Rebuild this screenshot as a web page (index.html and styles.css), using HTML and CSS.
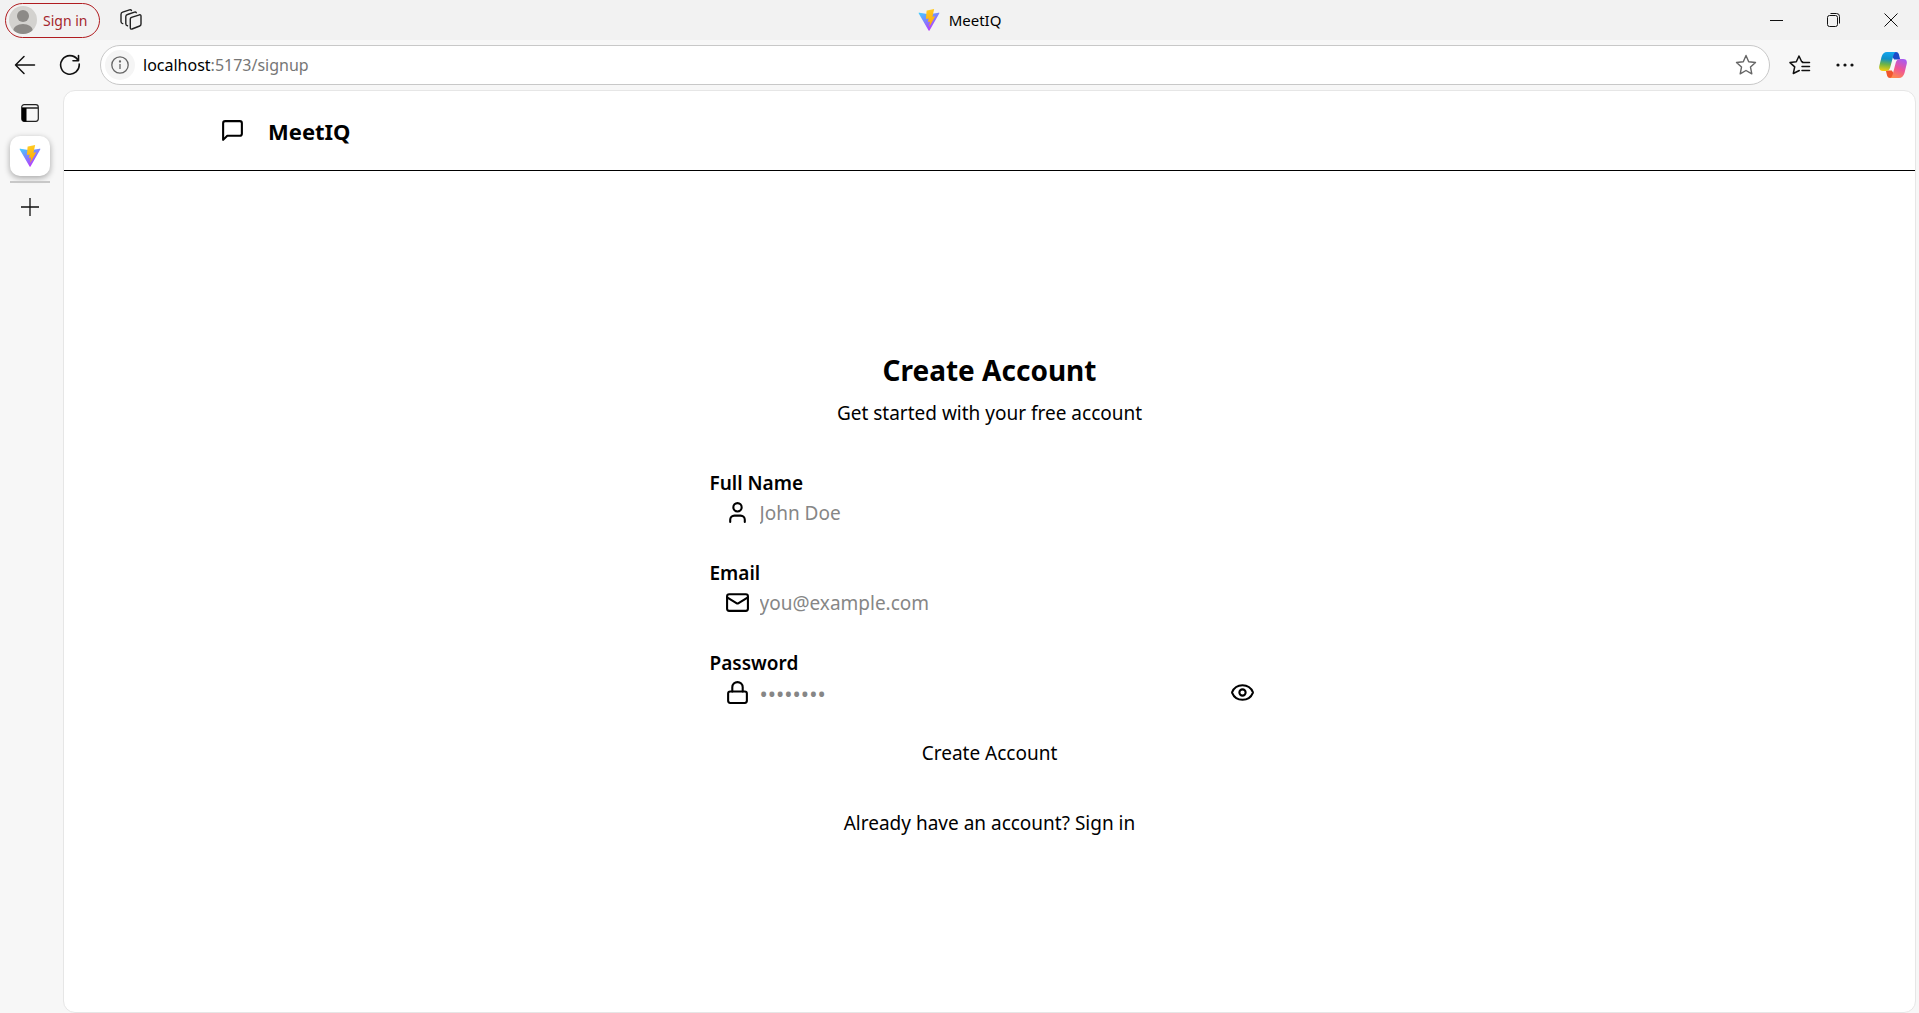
FILE: index.html
```html
<!DOCTYPE html>
<html lang="en">
<head>
<meta charset="utf-8">
<title>MeetIQ</title>
<link rel="stylesheet" href="styles.css">
</head>
<body>
<svg class="defs" aria-hidden="true">
  <defs>
    <linearGradient id="vite-a" x1="0" y1="0" x2="0.6" y2="1"><stop offset="0" stop-color="#41d1ff"/><stop offset="1" stop-color="#bd34fe"/></linearGradient>
    <linearGradient id="vite-b" x1="0.4" y1="0" x2="0.6" y2="1"><stop offset="0" stop-color="#ffd84a"/><stop offset="0.1" stop-color="#ffc820"/><stop offset="1" stop-color="#ffa800"/></linearGradient>
    <linearGradient id="cp-a" x1="0.4" y1="0" x2="0.3" y2="1"><stop offset="0" stop-color="#12a5ee"/><stop offset="0.35" stop-color="#1090c8"/><stop offset="0.65" stop-color="#6fb446"/><stop offset="1" stop-color="#f7cf10"/></linearGradient>
    <linearGradient id="cp-b" x1="0.7" y1="0" x2="0.3" y2="1"><stop offset="0" stop-color="#a95cf0"/><stop offset="0.5" stop-color="#ee5598"/><stop offset="1" stop-color="#ff8a4c"/></linearGradient>
    <symbol id="vite" viewBox="0 0 32 32">
      <path fill="url(#vite-a)" d="M30.900 6.500 16.800 31.200a.8.8 0 0 1-1.400 0L1.100 6.500a.8.8 0 0 1 .9-1.200l14 2.500 14-2.500a.8.8 0 0 1 .9 1.200z"/>
      <path fill="url(#vite-b)" d="m23.500 0-11 2.200-1 12.300 4-.8-1 5.300 3-.8-1.200 8 8.700-15.700-4 .8z"/>
    </symbol>
  </defs>
</svg>
<div class="window">
  <header class="titlebar">
    <div class="titlebar-left">
      <button class="profile" type="button">
        <svg width="28" height="28" viewBox="0 0 28 28" aria-hidden="true"><clipPath id="av"><circle cx="14" cy="14" r="14"/></clipPath><g clip-path="url(#av)"><path fill="#d3d2cf" d="M0 0h28v28H0z"/><circle cx="14" cy="10" r="6" fill="#8c8a87"/><ellipse cx="14" cy="25" rx="10" ry="7" fill="#8c8a87"/></g></svg>
        <span>Sign in</span>
      </button>
      <button class="icon-button" type="button" aria-label="Workspaces">
        <svg width="22" height="22" viewBox="0 0 22 22" fill="none" stroke="#222" stroke-width="1.400" stroke-linecap="round" stroke-linejoin="round"><path d="m11.500 8.300 8-2.500q1.500-.3 1.500 1.200v8q0 1.500-1.300 2l-7.700 3q-1.700.4-1.700-1.200V10q0-1.300 1.200-1.700z"/><path d="M16.300 3.700q-.5-1-1.800-.6l-7 2.400Q5.800 6 5.800 7.600v7.200q0 1.700 1.700 2"/><path d="M11.500 1.500q-.5-1-2-.6L2.700 3.200Q1 3.800 1 5.400v7.200q0 1.700 1.700 2"/></svg>
      </button>
    </div>
    <div class="window-title"><svg width="22" height="22" aria-hidden="true"><use href="#vite"/></svg><span>MeetIQ</span></div>
    <div class="window-controls">
      <button type="button" aria-label="Minimize"><svg width="14" height="14" stroke="#111"><path d="M0 7.500h13"/></svg></button>
      <button type="button" aria-label="Restore"><svg width="14" height="14" fill="none" stroke="#111"><rect x=".5" y="2.500" width="10" height="11" rx="2"/><path d="M3.500.5h6q3 0 3 3v7"/></svg></button>
      <button type="button" aria-label="Close"><svg width="14" height="14" stroke="#111"><path d="m.5.500 13 13m0-13-13 13"/></svg></button>
    </div>
  </header>

  <div class="toolbar">
    <button class="icon-button" type="button" aria-label="Back"><svg width="22" height="20" viewBox="0 0 22 20" fill="none" stroke="#111" stroke-width="1.500" stroke-linecap="round" stroke-linejoin="round"><path d="M20.500 10h-19M10 1.500 1.500 10l8.500 8.500"/></svg></button>
    <button class="icon-button reload" type="button" aria-label="Refresh"><svg width="22" height="22" viewBox="0 0 22 22" fill="none" stroke="#111" stroke-width="1.600" stroke-linecap="round" stroke-linejoin="round"><path d="M20.200 10A9.300 9.300 0 1 1 18.500 5.500M19.500 1.500v5.300H14"/></svg></button>
    <div class="address">
      <button class="site-info" type="button" aria-label="Site information"><svg width="18" height="18" viewBox="0 0 18 18" fill="none" stroke="#666" stroke-width="1.300"><circle cx="9" cy="9" r="8.200"/><path d="M9 8v5"/><circle cx="9" cy="5.500" r=".5" fill="#666"/></svg></button>
      <span class="url"><b>localhost</b>:5173/signup</span>
      <button class="icon-button" type="button" aria-label="Add to favorites"><svg width="22" height="22" viewBox="0 0 22 22" fill="none" stroke="#666" stroke-width="1.400" stroke-linejoin="round"><path d="m11 1.500 2.700 6.200 6.800.8-5 4.600 1.300 6.700-5.800-3.300-5.800 3.300 1.300-6.700-5-4.600 6.800-.8z"/></svg></button>
    </div>
    <div class="toolbar-actions">
      <button class="icon-button" type="button" aria-label="Favorites"><svg width="22" height="22" viewBox="0 0 22 22" fill="none" stroke="#111" stroke-width="1.500" stroke-linejoin="round" stroke-linecap="round"><path d="M13.500 7.700h-.8L10 2 7.300 7.700l-6.300.9 4.700 4.300-1.400 6.600 6-3M13.500 8.500h7M13 12.500h7.500M13 16.500h7.500"/></svg></button>
      <button class="icon-button" type="button" aria-label="Settings and more"><svg width="18" height="4" fill="#111"><circle cx="2" cy="2" r="1.600"/><circle cx="9" cy="2" r="1.600"/><circle cx="16" cy="2" r="1.600"/></svg></button>
      <button class="icon-button" type="button" aria-label="Copilot"><svg width="28" height="26" viewBox="0 0 28 26"><path fill="#1b49c8" d="M10 0h7q2.200 0 2.800 2l1.400 5.500h-6z"/><path fill="#f0562c" d="M18 26h-7q-2.200 0-2.800-2l-1.400-5.500h6z"/><path fill="url(#cp-a)" d="M8 0h9q-1.800.5-2.500 3l-3.300 12.500Q10.200 19 7 19H4q-4.700 0-3.700-5L2.500 5Q4 0 8 0z"/><path fill="url(#cp-b)" d="M20 26h-9q1.800-.5 2.500-3l3.300-12.500Q17.800 7 21 7h3q4.700 0 3.700 5l-2.200 9Q24 26 20 26z"/></svg></button>
    </div>
  </div>

  <div class="workspace">
    <nav class="tabs" aria-label="Vertical tabs">
      <button class="icon-button" type="button" aria-label="Tab actions"><svg width="18" height="18" fill="none" stroke="#222" stroke-width="1.200"><rect x=".7" y=".7" width="16.600" height="16.600" rx="2.500"/><path d="M1 4h16" stroke-width="1.500"/><path fill="#000" stroke="none" d="M1 4h4.500v13.500H3q-2 0-2-2z"/></svg></button>
      <button class="active-tab" type="button" aria-label="MeetIQ"><svg width="22" height="22"><use href="#vite"/></svg></button>
      <button class="icon-button new-tab" type="button" aria-label="New tab"><svg width="18" height="18" stroke="#111" stroke-width="1.300"><path d="M9 0v18M0 9h18"/></svg></button>
    </nav>

    <div class="page">
      <header class="site-header">
        <a class="brand" href="#">
          <svg class="icon" viewBox="0 0 24 24"><path d="M21 15a2 2 0 0 1-2 2H7l-4 4V5a2 2 0 0 1 2-2h14a2 2 0 0 1 2 2z"/></svg>
          <span>MeetIQ</span>
        </a>
      </header>
      <main class="signup">
        <div class="card">
          <h1>Create Account</h1>
          <p>Get started with your free account</p>
          <form>
            <div class="field">
              <label for="name">Full Name</label>
              <div class="control">
                <svg class="icon" viewBox="0 0 24 24"><path d="M19 21v-2a4 4 0 0 0-4-4H9a4 4 0 0 0-4 4v2"/><circle cx="12" cy="7" r="4"/></svg>
                <input id="name" type="text" placeholder="John Doe">
              </div>
            </div>
            <div class="field">
              <label for="email">Email</label>
              <div class="control">
                <svg class="icon" viewBox="0 0 24 24"><rect width="20" height="16" x="2" y="4" rx="2"/><path d="m22 7-8.970 5.700a1.940 1.940 0 0 1-2.060 0L2 7"/></svg>
                <input id="email" type="email" placeholder="you@example.com">
              </div>
            </div>
            <div class="field">
              <label for="password">Password</label>
              <div class="control">
                <svg class="icon" viewBox="0 0 24 24"><rect width="18" height="11" x="3" y="11" rx="2"/><path d="M7 11V7a5 5 0 0 1 10 0v4"/></svg>
                <input id="password" type="password" placeholder="••••••••">
                <button type="button" aria-label="Show password"><svg class="icon" viewBox="0 0 24 24"><path d="M2.060 12.350a1 1 0 0 1 0-.7 10.750 10.750 0 0 1 19.880 0 1 1 0 0 1 0 .7 10.750 10.750 0 0 1-19.880 0"/><circle cx="12" cy="12" r="3"/></svg></button>
              </div>
            </div>
            <button type="submit">Create Account</button>
          </form>
          <p>Already have an account? <a href="#">Sign in</a></p>
        </div>
      </main>
    </div>
  </div>
</div>
</body>
</html>
```
FILE: styles.css
```css
* { box-sizing: border-box; }
body {
  margin: 0;
  background: #f7f7f7;
  color: #000;
  font-family: "Segoe UI", "Noto Sans", sans-serif;
}
button {
  padding: 0;
  border: 0;
  background: none;
  color: inherit;
  font: inherit;
}
a { color: inherit; text-decoration: none; }
svg { display: block; flex: none; }
.defs { position: absolute; width: 0; height: 0; }

.window { display: flex; flex-direction: column; min-height: 100vh; }

/* Title bar */
.titlebar {
  display: grid;
  grid-template-columns: 1fr auto 1fr;
  height: 40px;
  background: #f2f2f2;
  font-size: 14px;
}
.titlebar-left { display: flex; align-items: center; gap: 20px; padding: 0 5px; }
.profile {
  display: flex;
  align-items: center;
  gap: 6px;
  height: 35px;
  padding: 0 12px 0 3px;
  border: 1px solid #b01c20;
  border-radius: 18px;
  color: #a4262c;
}
.icon-button { display: grid; place-items: center; }
.window-title { display: flex; align-items: center; gap: 9px; font-size: 15px; }
.window-controls { display: flex; justify-content: flex-end; }
.window-controls button { display: grid; place-items: center; width: 57px; }

/* Toolbar */
.toolbar {
  display: flex;
  align-items: center;
  height: 50px;
  padding: 0 12px 0 14px;
}
.reload { margin: 0 19px 0 23px; }
.address {
  display: flex;
  flex: 1;
  align-items: center;
  height: 40px;
  padding: 0 12px 0 4px;
  border: 1px solid #c8c8c8;
  border-radius: 20px;
  background: #fff;
}
.site-info {
  display: grid;
  place-items: center;
  width: 30px;
  height: 30px;
  border-radius: 50%;
  background: #f5f5f5;
}
.url { flex: 1; padding-left: 8px; color: #767676; font-size: 16px; }
.url b { color: #000; font-weight: 400; }
.toolbar-actions { display: flex; align-items: center; gap: 25px; padding-left: 19px; }

/* Vertical tabs */
.workspace { display: flex; flex: 1; }
.tabs {
  display: flex;
  flex-direction: column;
  align-items: center;
  width: 63px;
  padding: 14px 3px 0 0;
}
.active-tab {
  display: grid;
  place-items: center;
  width: 40px;
  height: 40px;
  margin: 14px 0 5px;
  border-radius: 10px;
  background: #fff;
  box-shadow: 0 2px 6px #0005;
}
.new-tab { width: 40px; padding-top: 15px; border-top: 2px solid #c8c8c8; }

/* Web page */
.page {
  display: flex;
  flex: 1;
  flex-direction: column;
  margin-right: 3px;
  border: 1px solid #e6e6e6;
  border-radius: 12px;
  background: #fff;
  font-size: 19px;
  line-height: 30px;
}
.icon {
  width: 25px;
  height: 25px;
  fill: none;
  stroke: currentColor;
  stroke-width: 2;
  stroke-linecap: round;
  stroke-linejoin: round;
}
.site-header {
  padding: 0 156px;
  border-bottom: 1px solid #000;
}
.brand {
  display: inline-flex;
  align-items: center;
  gap: 23px;
  height: 79px;
  vertical-align: top;
  font-size: 22px;
  font-weight: 700;
}
.signup {
  display: flex;
  flex: 1;
  align-items: center;
  justify-content: center;
  padding: 4px 20px 0;
}
.card { width: 100%; max-width: 560px; text-align: center; }
h1 { margin: 0 0 8px; font-size: 28px; line-height: 40px; }
p { margin: 0; }
form { display: grid; gap: 30px; margin: 40px 0; }
.field { display: grid; text-align: left; }
label { font-weight: 600; }
.control { display: flex; align-items: center; height: 30px; padding: 0 15px; }
.control input {
  flex: 1;
  min-width: 0;
  margin-left: 10px;
  padding: 0;
  border: 0;
  outline: 0;
  background: none;
  font: inherit;
}
.control input[type="password"] { font-size: 22px; }
.control input::placeholder { color: #868686; }
```
